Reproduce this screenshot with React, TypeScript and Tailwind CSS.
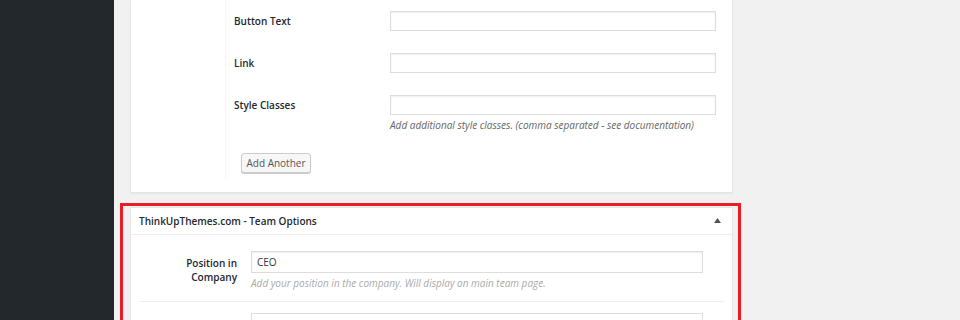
import React from "react";

const font = { fontFamily: '"Open Sans", "Noto Sans", Arial, sans-serif' };

function Row({ label, mt, children }: { label: string; mt: string; children?: React.ReactNode }) {
  return (
    <div className={`flex ${mt}`}>
      <div className="w-[156px] shrink-0 text-[10px] font-semibold text-[#23282d] leading-[20px]">{label}</div>
      <div className="w-[326px] shrink-0 flex flex-col">
        <div className="w-[326px] h-[20px] border border-[#dddddd] bg-white shadow-[inset_0_1px_2px_rgba(0,0,0,0.07)]" />
        {children}
      </div>
    </div>
  );
}

export default function App() {
  return (
    <div className="w-[960px] h-[320px] flex bg-[#f1f1f1] overflow-hidden" style={font}>
      <div className="w-[114px] shrink-0 bg-[#23282d]" />
      <div className="flex flex-col">
        {/* Top panel */}
        <div className="ml-[16px] w-[603px] bg-white border-x border-b border-[#e5e5e5] shadow-[0_1px_1px_rgba(0,0,0,0.04)] pb-[12px]">
          <div className="flex">
            <div className="w-[95px] h-[180px] shrink-0 border-r border-[#f6f6f6]" />
            <div className="pl-[8px] flex flex-col">
              <Row label="Button Text" mt="mt-[11px]" />
              <Row label="Link" mt="mt-[22px]" />
              <Row label="Style Classes" mt="mt-[22px]">
                <div className="text-[10px] italic text-[#666] leading-[14px] mt-[3px] whitespace-nowrap">
                  Add additional style classes. (comma separated - see documentation)
                </div>
              </Row>
              <div className="mt-[17px] ml-[7px]">
                <button className="h-[20px] w-[70px] text-[10px] leading-[18px] text-[#555] bg-[#f7f7f7] border border-[#cccccc] rounded-[3px] shadow-[0_1px_0_#cccccc]">
                  Add Another
                </button>
              </div>
            </div>
          </div>
        </div>

        {/* Red annotation box */}
        <div className="mt-[10px] ml-[6px] w-[621px] h-[140px] border-[3px] border-b-0 border-[#ec1c24] pl-[7px] pt-[1px]">
          <div className="w-[603px] h-full bg-white border-x border-t border-[#e5e5e5]">
            <div className="h-[27px] border-b border-[#eeeeee] flex items-center justify-between pl-[8px] pr-[11px]">
              <span className="text-[10px] font-semibold text-[#23282d]">ThinkUpThemes.com - Team Options</span>
              <svg width="7" height="5" viewBox="0 0 7 5" className="mb-[1px]">
                <path d="M0 5 L3.5 0 L7 5 Z" fill="#555" />
              </svg>
            </div>
            <div className="px-[8px]">
              <div className="flex pt-[16px] pb-[11px] border-b border-[#eeeeee]">
                <div className="w-[98px] shrink-0 text-right text-[10px] font-semibold text-[#23282d] leading-[14px] pt-[5px]">
                  Position in<br />Company
                </div>
                <div className="ml-[14px] flex flex-col">
                  <div className="w-[452px] h-[22px] border border-[#dddddd] bg-white shadow-[inset_0_1px_2px_rgba(0,0,0,0.07)] px-[5px] text-[10px] leading-[20px] text-[#32373c]">
                    CEO
                  </div>
                  <div className="text-[10px] italic text-[#aaaaaa] leading-[14px] mt-[3px] whitespace-nowrap">
                    Add your position in the company. Will display on main team page.
                  </div>
                </div>
              </div>
              <div className="flex pt-[11px]">
                <div className="w-[98px] shrink-0" />
                <div className="ml-[14px] w-[452px] h-[22px] border border-[#dddddd] bg-white" />
              </div>
            </div>
          </div>
        </div>
      </div>
    </div>
  );
}
